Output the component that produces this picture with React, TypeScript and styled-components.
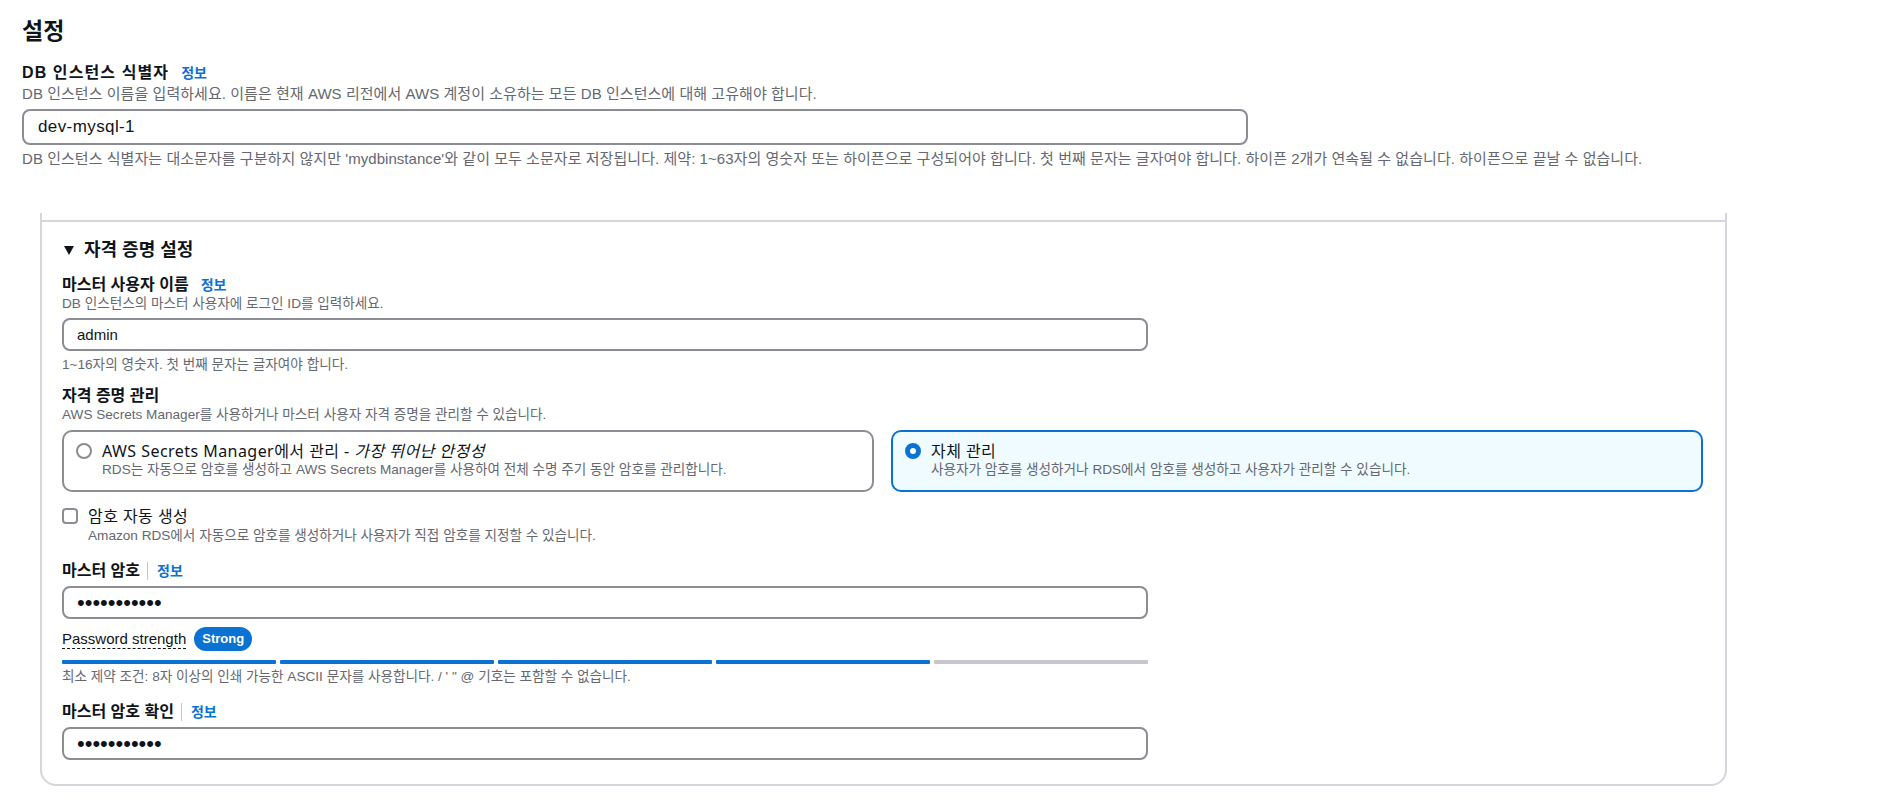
import styled, { createGlobalStyle } from 'styled-components';

const GlobalStyle = createGlobalStyle`
  * {
    box-sizing: border-box;
  }
  body {
    margin: 0;
    background: #ffffff;
    color: #0f141a;
    font-family: 'Liberation Sans', 'Noto Sans CJK KR', sans-serif;
  }
`;

const Page = styled.div`
  padding: 17px 0 0 22px;
`;

const Title = styled.h2`
  margin: 0;
  font-size: 23px;
  line-height: 28px;
  font-weight: 700;
`;

const Field = styled.div<{ $gap?: number }>`
  margin-top: ${(p) => p.$gap ?? 0}px;
`;

const LabelRow = styled.div<{ $big?: boolean }>`
  display: flex;
  align-items: center;
  font-size: 16px;
  letter-spacing: ${(p) => (p.$big ? '1.1px' : '0')};
  line-height: ${(p) => (p.$big ? '22px' : '20px')};
  font-weight: 700;
`;

const InfoLink = styled.span<{ $divided?: boolean }>`
  margin-left: ${(p) => (p.$divided ? '7px' : '12px')};
  padding-left: ${(p) => (p.$divided ? '9px' : '0')};
  border-left: ${(p) => (p.$divided ? '1px solid #c6c6cd' : 'none')};
  font-size: 14px;
  letter-spacing: 0;
  line-height: 18px;
  font-weight: 700;
  color: #0972d3;
`;

const Description = styled.div<{ $big?: boolean; $gap?: number }>`
  margin-top: ${(p) => p.$gap ?? 0}px;
  font-size: ${(p) => (p.$big ? '15px' : '13.6px')};
  letter-spacing: ${(p) => (p.$big ? '0.05px' : '0')};
  line-height: ${(p) => (p.$big ? '20px' : '18px')};
  color: #656871;
  white-space: nowrap;
`;

const TextInput = styled.input<{ $big?: boolean; $masked?: boolean }>`
  display: block;
  margin-top: 5px;
  width: ${(p) => (p.$big ? '1226px' : '1086px')};
  height: ${(p) => (p.$big ? '36px' : '33px')};
  padding: 0 ${(p) => (p.$big ? '14px' : '13px')};
  border: 2px solid #8c8c94;
  border-radius: 8px;
  background: #ffffff;
  color: #0f141a;
  font-family: 'Liberation Sans', 'Noto Sans CJK KR', sans-serif;
  font-size: ${(p) => (p.$masked ? '22px' : p.$big ? '17px' : '15px')};
  letter-spacing: ${(p) => (p.$big ? '0.4px' : '0')};
  outline: none;
`;

const Panel = styled.section`
  margin: 44px 0 0 18px;
  width: 1687px;
  padding-top: 7px;
  border: 2px solid #d5d6dc;
  border-top: none;
  border-radius: 0 0 16px 16px;
`;

const PanelBody = styled.div`
  border-top: 2px solid #d5d6dc;
  padding: 16px 22px 24px 20px;
`;

const ExpandHeading = styled.div`
  display: flex;
  align-items: center;
  font-size: 18px;
  line-height: 24px;
  font-weight: 700;

  svg {
    margin: 0 10px 0 2px;
  }
`;

const RadioGrid = styled.div`
  margin-top: 6px;
  display: grid;
  grid-template-columns: 1fr 1fr;
  gap: 17px;
`;

const RadioCard = styled.label<{ $selected?: boolean }>`
  display: flex;
  align-items: flex-start;
  gap: 10px;
  padding: 9px 14px 11px 12px;
  border: 2px solid ${(p) => (p.$selected ? '#0972d3' : '#8c8c94')};
  border-radius: 10px;
  background: ${(p) => (p.$selected ? '#f0fbff' : '#ffffff')};
`;

const RadioDot = styled.span<{ $checked?: boolean }>`
  flex-shrink: 0;
  margin-top: 2px;
  width: 16px;
  height: 16px;
  border-radius: 50%;
  background: #ffffff;
  border: ${(p) => (p.$checked ? '5px solid #0972d3' : '2px solid #8c8c94')};
`;

const OptionText = styled.div`
  display: flex;
  flex-direction: column;
`;

const OptionTitle = styled.span`
  font-family: 'Noto Sans', 'Noto Sans CJK KR', sans-serif;
  font-size: 16px;
  letter-spacing: 0.45px;
  line-height: 20px;
  color: #0f141a;

  em {
    font-style: italic;
  }
`;

const OptionDesc = styled.span<{ $tall?: boolean }>`
  font-size: 13.6px;
  line-height: ${(p) => (p.$tall ? '20px' : '18px')};
  color: #656871;
`;

const CheckRow = styled.label`
  margin-top: 14px;
  display: flex;
  align-items: flex-start;
  gap: 10px;
`;

const CheckBox = styled.span`
  flex-shrink: 0;
  margin-top: 2px;
  width: 16px;
  height: 16px;
  border: 2px solid #8c8c94;
  border-radius: 4px;
  background: #ffffff;
`;

const StrengthRow = styled.div`
  margin-top: 8px;
  display: flex;
  align-items: center;
  height: 24px;
`;

const StrengthLabel = styled.span`
  font-size: 15px;
  line-height: 19px;
  border-bottom: 1.5px dashed #0f141a;
`;

const Badge = styled.span`
  margin-left: 8px;
  height: 24px;
  padding: 0 8px;
  border-radius: 12px;
  background: #0972d3;
  color: #ffffff;
  font-size: 13px;
  font-weight: 700;
  line-height: 24px;
`;

const Meter = styled.div`
  margin-top: 9px;
  width: 1086px;
  display: grid;
  grid-template-columns: repeat(5, 1fr);
  gap: 4px;
`;

const MeterSegment = styled.span<{ $filled?: boolean }>`
  height: 4px;
  border-radius: 1px;
  background: ${(p) => (p.$filled ? '#0972d3' : '#c6c6cd')};
`;

const strength = 4;

const App = () => {
  return (
    <>
      <GlobalStyle />
      <Page>
        <Title>설정</Title>

        <Field $gap={17}>
          <LabelRow $big>
            DB 인스턴스 식별자
            <InfoLink>정보</InfoLink>
          </LabelRow>
          <Description $big>
            DB 인스턴스 이름을 입력하세요. 이름은 현재 AWS 리전에서 AWS 계정이 소유하는 모든 DB 인스턴스에 대해 고유해야 합니다.
          </Description>
          <TextInput $big defaultValue='dev-mysql-1' />
          <Description $big $gap={4}>
            DB 인스턴스 식별자는 대소문자를 구분하지 않지만 'mydbinstance'와 같이 모두 소문자로 저장됩니다. 제약: 1~63자의 영숫자 또는 하이픈으로 구성되어야 합니다. 첫 번째 문자는 글자여야 합니다. 하이픈 2개가 연속될 수 없습니다. 하이픈으로 끝날 수 없습니다.
          </Description>
        </Field>

        <Panel>
          <PanelBody>
            <ExpandHeading>
              <svg width='10' height='9' viewBox='0 0 10 9'>
                <polygon points='0,0 10,0 5,9' fill='#0f141a' />
              </svg>
              자격 증명 설정
            </ExpandHeading>

            <Field $gap={13}>
              <LabelRow>
                마스터 사용자 이름
                <InfoLink>정보</InfoLink>
              </LabelRow>
              <Description>DB 인스턴스의 마스터 사용자에 로그인 ID를 입력하세요.</Description>
              <TextInput defaultValue='admin' />
              <Description $gap={5}>1~16자의 영숫자. 첫 번째 문자는 글자여야 합니다.</Description>
            </Field>

            <Field $gap={12}>
              <LabelRow>자격 증명 관리</LabelRow>
              <Description>AWS Secrets Manager를 사용하거나 마스터 사용자 자격 증명을 관리할 수 있습니다.</Description>
              <RadioGrid>
                <RadioCard>
                  <RadioDot />
                  <OptionText>
                    <OptionTitle>
                      AWS Secrets Manager에서 관리 - <em>가장 뛰어난 안정성</em>
                    </OptionTitle>
                    <OptionDesc>
                      RDS는 자동으로 암호를 생성하고 AWS Secrets Manager를 사용하여 전체 수명 주기 동안 암호를 관리합니다.
                    </OptionDesc>
                  </OptionText>
                </RadioCard>
                <RadioCard $selected>
                  <RadioDot $checked />
                  <OptionText>
                    <OptionTitle>자체 관리</OptionTitle>
                    <OptionDesc>사용자가 암호를 생성하거나 RDS에서 암호를 생성하고 사용자가 관리할 수 있습니다.</OptionDesc>
                  </OptionText>
                </RadioCard>
              </RadioGrid>
            </Field>

            <CheckRow>
              <CheckBox />
              <OptionText>
                <OptionTitle>암호 자동 생성</OptionTitle>
                <OptionDesc $tall>Amazon RDS에서 자동으로 암호를 생성하거나 사용자가 직접 암호를 지정할 수 있습니다.</OptionDesc>
              </OptionText>
            </CheckRow>

            <Field $gap={15}>
              <LabelRow>
                마스터 암호
                <InfoLink $divided>정보</InfoLink>
              </LabelRow>
              <TextInput $masked type='password' defaultValue='abcdefghijk' />
              <StrengthRow>
                <StrengthLabel>Password strength</StrengthLabel>
                <Badge>Strong</Badge>
              </StrengthRow>
              <Meter>
                {[0, 1, 2, 3, 4].map((i) => (
                  <MeterSegment key={i} $filled={i < strength} />
                ))}
              </Meter>
              <Description $gap={4}>
                최소 제약 조건: 8자 이상의 인쇄 가능한 ASCII 문자를 사용합니다. / ' " @ 기호는 포함할 수 없습니다.
              </Description>
            </Field>

            <Field $gap={16}>
              <LabelRow>
                마스터 암호 확인
                <InfoLink $divided>정보</InfoLink>
              </LabelRow>
              <TextInput $masked type='password' defaultValue='abcdefghijk' />
            </Field>
          </PanelBody>
        </Panel>
      </Page>
    </>
  );
};

export default App;
